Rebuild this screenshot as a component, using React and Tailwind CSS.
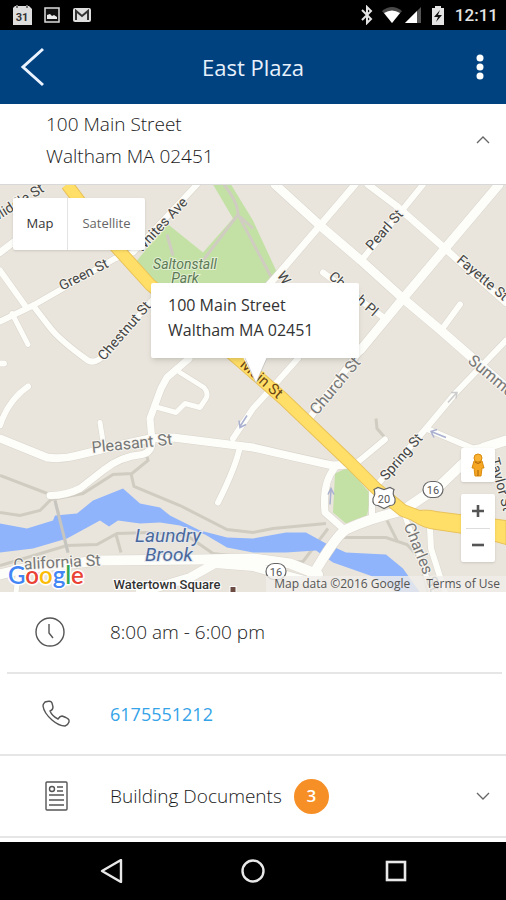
import React from "react";

const whiteRoads = [
  { d: "M275 184L320 225L361 260L403 298L441 330L506 387", w: 9 },
  { d: "M499 184L445 248L403 298L360 350", w: 9 },
  { d: "M360 350L310 417", w: 7 },
  { d: "M355 184L320 225L278 274L262 292", w: 7 },
  { d: "M298 358L273 386L253 408L233 438", w: 6 },
  { d: "M240 446Q236 466 218 502", w: 6 },
  { d: "M423 184L363 258", w: 6 },
  { d: "M368 184L396 205L445 248L456 258L506 302", w: 7 },
  { d: "M323 272L385 318", w: 6 },
  { d: "M460 304L441 330", w: 6 },
  { d: "M506 340L456 392L426 428L374 488", w: 6 },
  { d: "M0 438L47 457Q62 459 77 455L118 445L150 438L173 437L253 447Q300 458 333 465L350 464", w: 8 },
  { d: "M356 463L385 439", w: 6 },
  { d: "M335 467Q322 482 325 512L342 527", w: 7 },
  { d: "M372 490L372 516", w: 6 },
  { d: "M506 440L484 447L463 463L440 485L403 510Q370 518 346 529Q336 535 312 576", w: 10 },
  { d: "M426 428L473 448L490 445", w: 6 },
  { d: "M405 516L414 540L432 592", w: 5 },
  { d: "M430 528L431 548L445 592", w: 6 },
  { d: "M0 574L24 568L100 560L200 559L253 558L290 563L318 574", w: 10 },
  { d: "M140 592L190 577L215 563L253 566L320 584", w: 9 },
  { d: "M16 592L18 575", w: 5 },
  { d: "M0 321L33 305L115 258L133 252L197 184", w: 6 },
  { d: "M0 270L25 305", w: 6 },
  { d: "M33 305L50 327Q60 340 88 360Q96 364 104 354L154 298", w: 6 },
  { d: "M12 313L28 344", w: 5 },
  { d: "M0 252L13 242L40 222", w: 7 },
  { d: "M0 363L4 363", w: 6 },
  { d: "M28 386Q8 400 0 425", w: 6 },
  { d: "M189 358L167 377L161 388L150 418L152 440Q152 452 142 454Q120 456 103 470L80 488Q66 495 50 495", w: 7 },
  { d: "M180 372L204 387Q209 393 206 398L200 407L185 403L176 412L158 407", w: 5 },
  { d: "M100 422L104 447", w: 5 },
];

const paths = [
  "M0 475L50 494",
  "M0 512L20 515L40 510L51 499L83 493L113 474L132 473L148 460L146 452",
  "M131 473L134 486L180 505L227 529L253 532L273 528L326 523",
  "M55 500L68 552",
  "M0 565L67 545L97 544L117 533L150 532L187 535L213 553L253 558",
  "M116 534L121 552",
  "M253 565L303 561L328 528",
  "M376 418L377 428L384 436",
  "M336 537L386 537L407 544L420 558L428 592",
  "M387 520L397 540",
];

const river =
  "M0 523L27 528L53 520L55 515L77 513L93 500L123 488L140 503L160 507L170 515L200 530L227 537L253 538L286 532L306 532L326 543L346 552L386 554L403 568L420 592L396 592L386 583L370 575L333 562L316 550L286 552L253 552L227 547L205 534L180 525L160 522L140 523L118 520L109 526L100 520L67 538L33 548L0 552Z";

const mainStreet = "M67 184L103 232L150 284L242 362L283 398L350 462L376 488L403 510L424 518";

const labels = [
  { t: "Middle St", x: 18, y: 203, r: -32, s: 14 },
  { t: "Whites Ave", x: 162, y: 225, r: -47, s: 14 },
  { t: "Green St", x: 84, y: 275, r: -27, s: 14 },
  { t: "Chestnut St", x: 125, y: 331, r: -49, s: 14 },
  { t: "Pearl St", x: 385, y: 230, r: -49, s: 14 },
  { t: "Fayette St", x: 482, y: 278, r: 40, s: 14 },
  { t: "W", x: 283, y: 278, r: 55, s: 14 },
  { t: "Church Pl", x: 353, y: 294, r: 41, s: 14 },
  { t: "Church St", x: 336, y: 386, r: -50, s: 16, c: "#777777" },
  { t: "Summer St", x: 500, y: 384, r: 40, s: 16, c: "#777777" },
  { t: "Spring St", x: 402, y: 457, r: -49, s: 14 },
  { t: "Pleasant St", x: 132, y: 444, r: -6, s: 16, c: "#777777" },
  { t: "Taylor St", x: 500, y: 484, r: 75, s: 14 },
  { t: "Charles St", x: 421, y: 557, r: 68, s: 16, c: "#777777" },
  { t: "California St", x: 57, y: 563, r: -3, s: 16, c: "#777777" },
];

function MapArt() {
  return (
    <svg
      className="block h-full w-full"
      viewBox="0 184 506 408"
      preserveAspectRatio="xMidYMid slice"
      role="img"
      aria-label="Map of Main Street, Waltham"
    >
      <rect x="-400" y="184" width="1400" height="408" fill="#e9e5dc" />
      <path d="M137 260L167 223L203 252L233 218L213 184L231 184L253 220L277 272L270 290L150 290Z" fill="#c3e1a5" />
      <path d="M335 473L348 467L371 494L367 515L346 523L333 512Z" fill="#c3e1a5" />
      <g fill="none" stroke="#d0ccc1" strokeWidth="3">
        <path d="M224 184Q238 202 238 214L272 278M238 214Q222 235 203 260M240 216L253 228M167 234L173 255" />
        {paths.map((d) => (
          <path key={d} d={d} />
        ))}
      </g>
      <path d={river} fill="#90b4fb" />
      <path d="M55 500L68 552" stroke="#c6c5c0" strokeWidth="3" />
      <g fill="none" strokeLinecap="round" strokeLinejoin="round">
        {whiteRoads.map((r) => (
          <path key={r.d} d={r.d} stroke="#d9d5cb" strokeWidth={r.w + 1} />
        ))}
        {whiteRoads.map((r) => (
          <path key={r.d} d={r.d} stroke="#fdfdfa" strokeWidth={r.w} />
        ))}
      </g>
      <g fill="none" strokeLinejoin="round">
        <path d={mainStreet} stroke="#e9c25a" strokeWidth="13" />
        <path d="M418 510Q430 509 436 511L506 520V544L470 534L436 529Q424 528 412 520Z" fill="#ffdf67" stroke="#e9c25a" />
        <path d={mainStreet} stroke="#ffdf67" strokeWidth="11" />
      </g>
      <g stroke="#a9b0d0" strokeWidth="1.5" fill="none">
        <path d="M247 415L240 426M239 420L240 427L246 424" />
        <path d="M330 504L331 489M328 494L331 488L334 494" />
        <path d="M446 437L431 431M437 429L431 431L434 437" />
        <path d="M448 402L456 393M451 392L457 392L456 398" stroke="#cccccc" />
      </g>
      <g fontFamily="Roboto, sans-serif" textAnchor="middle">
        {labels.map((l) => (
          <text
            key={l.t}
            x={l.x}
            y={l.y}
            transform={`rotate(${l.r} ${l.x} ${l.y})`}
            fontSize={l.s}
            fill={l.c || "#444444"}
            stroke="#f6f4ee"
            strokeWidth="2"
            paintOrder="stroke"
            dominantBaseline="middle"
          >
            {l.t}
          </text>
        ))}
        <text x="261" y="379" transform="rotate(41 261 379)" fontSize="15" fill="#6b4514" stroke="#ffdf67" strokeWidth="2" paintOrder="stroke" dominantBaseline="middle">
          Main St
        </text>
        <g fontStyle="italic" fill="#5d7a56" fontSize="14" stroke="#e2efd3" strokeWidth="2" paintOrder="stroke">
          <text x="185" y="268">Saltonstall</text>
          <text x="185" y="282">Park</text>
        </g>
        <g fontStyle="italic" fill="#4b689c" fontSize="19" stroke="#e4e8ee" strokeWidth="2" paintOrder="stroke">
          <text x="168" y="541">Laundry</text>
          <text x="169" y="560">Brook</text>
        </g>
        <text x="167" y="588" fontSize="13" fontWeight="500" fill="#333333" stroke="#ffffff" strokeWidth="2" paintOrder="stroke">
          Watertown Square
        </text>
      </g>
      <rect x="230" y="586" width="6" height="6" fill="#6b4b42" stroke="#ffffff" />
      <g fill="#ffffff" stroke="#666666" strokeWidth="1.2">
        <rect x="423" y="481" width="20" height="16" rx="8" />
        <rect x="266" y="563" width="20" height="16" rx="8" />
        <path d="M374 489L378 487L384 489L390 487L394 489Q392 493 395 498Q396 505 390 505L384 508L378 505Q372 505 373 498Q376 493 374 489Z" />
      </g>
      <g fontFamily="Roboto, sans-serif" fontSize="11" fill="#555555" textAnchor="middle">
        <text x="433" y="493">16</text>
        <text x="276" y="575">16</text>
        <text x="384" y="502">20</text>
      </g>
      <g fontFamily="Lato, sans-serif" fontSize="24" fontWeight="600" stroke="#ffffff" strokeWidth="3" paintOrder="stroke" strokeLinejoin="round">
        <text x="8" y="583">
          <tspan fill="#4285f4">G</tspan>
          <tspan fill="#ea4335">o</tspan>
          <tspan fill="#fbbc05">o</tspan>
          <tspan fill="#4285f4">g</tspan>
          <tspan fill="#34a853">l</tspan>
          <tspan fill="#ea4335">e</tspan>
        </text>
      </g>
    </svg>
  );
}

function StatusBar() {
  return (
    <div className="flex h-[30px] items-center bg-black pr-2 pl-3 text-[#e4e4e4]">
      <svg className="h-[22px] w-5" viewBox="0 0 20 22" aria-hidden="true">
        <path d="M3 2H17L20 5V21H1V4Z" fill="#dedede" />
        <path d="M5 1V4M15 1V4" stroke="#777777" strokeWidth="2" />
        <text x="10" y="17" textAnchor="middle" fontFamily="Roboto, sans-serif" fontSize="11" fontWeight="700" fill="#333333">31</text>
      </svg>
      <svg className="ml-3 h-4 w-4" viewBox="0 0 16 16" aria-hidden="true">
        <rect x="1" y="1" width="14" height="14" fill="#111111" stroke="#dcdcdc" strokeWidth="1.5" />
        <path d="M3 12V8L6 7L8 9L10 8L13 10V12Z" fill="#eeeeee" />
      </svg>
      <svg className="ml-3 h-4 w-5" viewBox="0 0 20 16" aria-hidden="true">
        <rect x="1" y="1" width="18" height="14" rx="2" fill="#dedede" />
        <path d="M4 13V4L10 9L16 4V13" fill="none" stroke="#333333" strokeWidth="2" />
      </svg>
      <svg className="ml-auto h-5 w-3" viewBox="0 0 12 20" fill="none" stroke="currentColor" strokeWidth="2" aria-hidden="true">
        <path d="M1 5L10 14L6 18V2L10 6L1 15" />
      </svg>
      <svg className="ml-2 h-[18px] w-[22px]" viewBox="0 0 22 18" aria-hidden="true">
        <path d="M1 5Q11 -3 21 5L11 17Z" fill="#4a4a4a" />
        <path d="M3 7Q11 2 19 7L11 17Z" fill="#ffffff" />
      </svg>
      <svg className="ml-px h-[18px] w-[18px]" viewBox="0 0 18 18" aria-hidden="true">
        <path d="M1 17L17 1V17Z" fill="#555555" />
        <path d="M1 17L13 5V17Z" fill="#ffffff" />
      </svg>
      <svg className="ml-2 h-[19px] w-4" viewBox="0 0 16 19" aria-hidden="true">
        <path d="M5 0H11V2H14V19H2V2H5Z" fill="#e4e4e4" />
        <path d="M10 4L4 11H8L6 16L12 9H8Z" fill="#111111" />
      </svg>
      <span className="ml-2 w-11 text-right font-['Roboto',sans-serif] text-[17px] leading-8 font-medium">12:11</span>
    </div>
  );
}

function Chevron({ up }) {
  return (
    <svg className="h-3 w-4" viewBox="0 0 16 12" fill="none" stroke="#666666" strokeWidth="1.3" aria-hidden="true">
      <path d={up ? "M2 9L8 3L14 9" : "M2 3L8 9L14 3"} />
    </svg>
  );
}

export default function App() {
  return (
    <div className="flex min-h-screen flex-col bg-white font-['Open_Sans',sans-serif] text-[#1a1a1a]">
      <StatusBar />
      <header className="flex h-[74px] items-center justify-between bg-[#004280] px-4 text-white">
        <button aria-label="Back" className="flex w-8 justify-center">
          <svg className="h-10 w-[26px]" viewBox="0 0 26 40" fill="none" stroke="#eaf3ff" strokeWidth="3" aria-hidden="true">
            <path d="M24 2L4 20L24 38" />
          </svg>
        </button>
        <h1 className="text-[22px] text-[#e8f1fb]">East Plaza</h1>
        <button aria-label="More options" className="flex w-8 justify-end pr-1.5">
          <svg className="h-[26px] w-2" viewBox="0 0 8 26" fill="#ffffff" aria-hidden="true">
            <circle cx="4" cy="4" r="3.5" />
            <circle cx="4" cy="13" r="3.5" />
            <circle cx="4" cy="22" r="3.5" />
          </svg>
        </button>
      </header>

      <main className="flex grow flex-col">
        <section className="flex h-20 items-center justify-between pr-[15px] pl-[46px]">
          <address className="pb-2 text-[19px] leading-8 font-light not-italic">
            100 Main Street
            <br />
            Waltham MA 02451
          </address>
          <button aria-label="Collapse address" className="pb-2">
            <Chevron up />
          </button>
        </section>

        <section className="relative h-[408px] overflow-hidden border-t border-[#d8d8d8]">
          <MapArt />
          <div className="absolute top-[13px] left-[13px] flex h-[52px] rounded-xs bg-white text-[13px] shadow">
            <button className="w-[55px] border-r border-[#e3e3e3] text-[#333333]">Map</button>
            <button className="w-[77px] text-[#666666]">Satellite</button>
          </div>

          <div className="absolute top-[98px] left-[151px] w-[208px]">
            <div className="h-[75px] rounded-xs bg-white pt-2.5 pl-[17px] text-[16px] leading-[25px] text-[#333333] shadow-md">
              100 Main Street
              <br />
              Waltham MA 02451
            </div>
            <svg className="absolute top-[74px] left-[92px] h-[27px] w-6" viewBox="0 0 24 27" aria-hidden="true">
              <path d="M0 0H24L13 26Z" fill="#ffffff" />
              <path d="M24 1L13 26L2 1" fill="none" stroke="#bbbbbb" strokeWidth="0.7" />
            </svg>
          </div>

          <button aria-label="Street View" className="absolute top-[263px] right-[11px] flex h-[34px] w-[34px] items-center justify-center rounded-xs bg-white shadow">
            <svg className="h-6 w-4" viewBox="0 0 16 24" aria-hidden="true">
              <path d="M4 8H12L14 15H12L11 23H5L4 15H2Z" fill="#f5a623" stroke="#d98b10" />
              <circle cx="8" cy="5" r="4" fill="#f9b233" stroke="#d98b10" />
              <path d="M5 9Q8 12 11 9M8 17V23" fill="none" stroke="#a9630a" />
            </svg>
          </button>

          <div className="absolute top-[309px] right-[11px] flex h-[68px] w-[34px] flex-col items-center rounded-xs bg-white shadow">
            <button aria-label="Zoom in" className="flex w-full grow items-center justify-center">
              <svg className="h-3 w-3" viewBox="0 0 12 12" stroke="#555555" strokeWidth="2.6" aria-hidden="true">
                <path d="M6 0V12M0 6H12" />
              </svg>
            </button>
            <div className="h-px w-6 bg-[#dddddd]" />
            <button aria-label="Zoom out" className="flex w-full grow items-center justify-center">
              <svg className="h-3 w-3" viewBox="0 0 12 12" stroke="#555555" strokeWidth="2.6" aria-hidden="true">
                <path d="M0 6H12" />
              </svg>
            </button>
          </div>

          <div className="absolute right-0 bottom-0 flex h-4 items-center gap-4 bg-[#f0eeea]/80 pr-1.5 pl-2 text-[12px] leading-4 text-[#555555]">
            <span>Map data ©2016 Google</span>
            <a href="#terms">Terms of Use</a>
          </div>
        </section>

        <section className="mr-1 ml-[7px] flex h-[82px] items-center border-b-2 border-[#e6e6e6] pl-[27px]">
          <svg className="h-8 w-8" viewBox="0 0 32 32" fill="none" stroke="#555555" strokeWidth="1.4" aria-hidden="true">
            <circle cx="16" cy="16" r="14" />
            <path d="M15 8V17L19 22" />
          </svg>
          <span className="ml-11 text-[19px] font-light">8:00 am - 6:00 pm</span>
        </section>

        <section className="flex h-[82px] items-center border-b-2 border-[#e6e6e6] pl-10">
          <svg className="h-8 w-8" viewBox="0 0 32 32" fill="none" stroke="#555555" strokeWidth="1.4" strokeLinejoin="round" aria-hidden="true">
            <path d="M5 4Q3 6 3 8Q4 15 12 22Q19 28 25 28Q28 27 29 24V22Q28 20 22 18Q20 18 18 21Q12 18 10 13Q13 12 13 9L12 5Q11 2 5 4Z" />
          </svg>
          <a href="tel:6175551212" className="ml-[38px] text-[18px] text-[#35a3e8]">6175551212</a>
        </section>

        <section className="flex h-[82px] items-center border-b-2 border-[#e6e6e6] pr-[15px] pl-10">
          <svg className="h-8 w-8" viewBox="0 0 32 32" fill="none" stroke="#555555" strokeWidth="1.4" aria-hidden="true">
            <rect x="6" y="2" width="21" height="28" rx="1" />
            <circle cx="12" cy="9" r="2.5" />
            <path d="M17 7H23M17 11H23M9 15H24M9 20H24M9 25H24" />
          </svg>
          <span className="ml-[38px] text-[19px] font-light">Building Documents</span>
          <span className="ml-3 flex h-[35px] w-[35px] items-center justify-center rounded-full bg-[#f68f26] text-[17px] font-semibold text-white">3</span>
          <button aria-label="Expand building documents" className="ml-auto">
            <Chevron />
          </button>
        </section>
      </main>

      <nav className="flex h-[58px] items-center justify-center gap-[118px] bg-black">
        <button aria-label="Back">
          <svg className="h-6 w-6" viewBox="0 0 24 24" fill="none" stroke="#e8e8e8" strokeWidth="2.4" strokeLinejoin="round" aria-hidden="true">
            <path d="M22 1V23L3 12Z" />
          </svg>
        </button>
        <button aria-label="Home">
          <svg className="h-6 w-6" viewBox="0 0 24 24" fill="none" stroke="#e8e8e8" strokeWidth="2.4" aria-hidden="true">
            <circle cx="12" cy="12" r="10.5" />
          </svg>
        </button>
        <button aria-label="Recent apps">
          <svg className="h-6 w-6" viewBox="0 0 24 24" fill="none" stroke="#e8e8e8" strokeWidth="2.6" aria-hidden="true">
            <rect x="4" y="3" width="18" height="18" />
          </svg>
        </button>
      </nav>
    </div>
  );
}
